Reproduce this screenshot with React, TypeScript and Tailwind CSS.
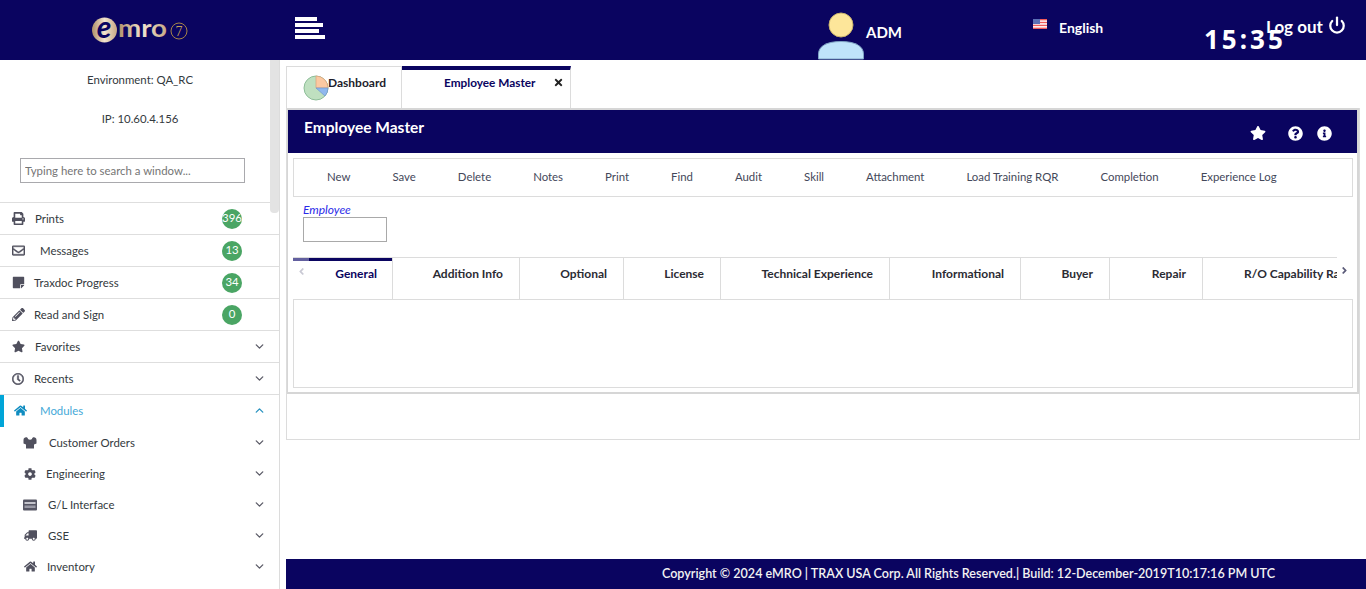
import { ReactNode } from "react";
import {
  FaAngleLeft,
  FaAngleRight,
  FaCog,
  FaHome,
  FaInfoCircle,
  FaPencilAlt,
  FaPrint,
  FaQuestionCircle,
  FaRegClock,
  FaRegEnvelope,
  FaStar,
  FaStickyNote,
  FaTimes,
  FaTruck,
} from "react-icons/fa";
import { FiPower } from "react-icons/fi";
import { ChevronDown, ChevronUp } from "lucide-react";

function UsersIcon() {
  return (
    <svg width="14" height="13" viewBox="0 0 14 13" fill="currentColor">
      <path d="M0.5 4 C0.5 0.5 5 0.5 5 3 C6 4 8 4 9 3 C9 0.5 13.5 0.5 13.5 4 L13.5 7.5 L11 8.5 L11 12.5 L3 12.5 L3 8.5 L0.5 7.5 Z" />
    </svg>
  );
}

function CardIcon() {
  return (
    <svg width="14" height="12" viewBox="0 0 14 12">
      <rect width="14" height="11" y="0.5" rx="1" fill="#565664" />
      <rect x="1.5" y="3" width="11" height="2" fill="#c4c4cc" />
      <rect x="1.5" y="6.5" width="11" height="2.5" fill="#9a9aa6" />
    </svg>
  );
}

const topItems: { label: string; icon: ReactNode; badge?: string; labelClass: string }[] = [
  { label: "Prints", icon: <FaPrint />, badge: "396", labelClass: "ml-[10px]" },
  { label: "Messages", icon: <FaRegEnvelope stroke="currentColor" strokeWidth={15} />, badge: "13", labelClass: "ml-[15px]" },
  { label: "Traxdoc Progress", icon: <FaStickyNote />, badge: "34", labelClass: "ml-[9px]" },
  { label: "Read and Sign", icon: <FaPencilAlt />, badge: "0", labelClass: "ml-[9px]" },
  { label: "Favorites", icon: <FaStar />, labelClass: "ml-[10px]" },
  { label: "Recents", icon: <FaRegClock stroke="currentColor" strokeWidth={20} className="text-xs" />, labelClass: "ml-[9px]" },
];

const moduleItems: { label: string; icon: ReactNode; labelClass: string }[] = [
  { label: "Customer Orders", icon: <UsersIcon />, labelClass: "ml-[12px]" },
  { label: "Engineering", icon: <FaCog className="text-xs" />, labelClass: "ml-[9px]" },
  { label: "G/L Interface", icon: <CardIcon />, labelClass: "ml-[11px]" },
  { label: "GSE", icon: <FaTruck className="-scale-x-100 text-[13px]" />, labelClass: "ml-[11px]" },
  { label: "Inventory", icon: <FaHome className="text-[13px]" />, labelClass: "ml-[10px]" },
];

const actions = [
  "New",
  "Save",
  "Delete",
  "Notes",
  "Print",
  "Find",
  "Audit",
  "Skill",
  "Attachment",
  "Load Training RQR",
  "Completion",
  "Experience Log",
];

const tabs: { label: string; widthClass: string }[] = [
  { label: "Addition Info", widthClass: "w-[127px]" },
  { label: "Optional", widthClass: "w-[104px]" },
  { label: "License", widthClass: "w-[97px]" },
  { label: "Technical Experience", widthClass: "w-[169px]" },
  { label: "Informational", widthClass: "w-[131px]" },
  { label: "Buyer", widthClass: "w-[89px]" },
  { label: "Repair", widthClass: "w-[93px]" },
];

function Logo() {
  return (
    <svg width="100" height="28" viewBox="0 0 100 28">
      <defs>
        <linearGradient id="gold" x1="0" y1="0" x2="1" y2="0">
          <stop offset="0" stopColor="#b08f68" />
          <stop offset="0.5" stopColor="#f2e4cf" />
          <stop offset="1" stopColor="#c6a884" />
        </linearGradient>
      </defs>
      <circle cx="13.5" cy="14" r="12.5" fill="url(#gold)" />
      <text x="13" y="22" textAnchor="middle" fontSize="30" fontStyle="italic" fontWeight="700" fill="#0a0460" fontFamily="Lato, sans-serif">
        e
      </text>
      <text x="27" y="21" fontSize="25" fontWeight="700" fill="url(#gold)" fontFamily="Lato, sans-serif" textLength="49" lengthAdjust="spacingAndGlyphs">
        mro
      </text>
      <circle cx="88" cy="15" r="8" fill="none" stroke="#a58348" strokeWidth="1" />
      <text x="88" y="20" textAnchor="middle" fontSize="14" fill="#c39f5a" fontFamily="Liberation Serif, serif">
        7
      </text>
    </svg>
  );
}

function UserIcon() {
  return (
    <svg width="48" height="50" viewBox="0 0 48 50" className="shrink-0">
      <circle cx="24" cy="15" r="12" fill="#fde69a" stroke="#c8b26c" strokeWidth="1" />
      <path d="M1.5 49 V44 C1.5 36 10 31.5 24 31.5 C38 31.5 46.5 36 46.5 44 V49 Z" fill="#bfe3fb" stroke="#7fa3c4" strokeWidth="1" />
    </svg>
  );
}

function Flag() {
  return (
    <svg width="14" height="10" viewBox="0 0 14 10">
      <rect width="14" height="10" fill="#fff" />
      <rect y="0" width="14" height="1.4" fill="#ef5a5a" />
      <rect y="2.8" width="14" height="1.4" fill="#ef5a5a" />
      <rect y="5.7" width="14" height="1.4" fill="#ef5a5a" />
      <rect y="8.6" width="14" height="1.4" fill="#ef5a5a" />
      <rect width="7" height="5" fill="#5b6fb5" />
    </svg>
  );
}

function Pie() {
  return (
    <svg width="26" height="26" viewBox="0 0 26 26" className="shrink-0">
      <circle cx="13" cy="13" r="12" fill="#bfe0c0" stroke="#8dbd98" strokeWidth="1" />
      <path d="M13 13 L13 1 A12 12 0 0 1 25 13 Z" fill="#fcc9a2" stroke="#d9a27a" strokeWidth="0.7" />
      <path d="M13 13 L25 13 A12 12 0 0 1 22 21 Z" fill="#90b8ee" stroke="#6f97cf" strokeWidth="0.7" />
    </svg>
  );
}

function Badge({ value }: { value: string }) {
  return (
    <span className="flex h-5 w-5 shrink-0 items-start justify-center rounded-full bg-[#4aa564] text-[11.4px] leading-[18px] text-white">
      {value}
    </span>
  );
}

export default function App() {
  return (
    <div className="flex h-[589px] w-[1366px] flex-col overflow-hidden bg-white font-['Lato',sans-serif] text-[11.4px] text-[#343a40]">
      <header className="relative flex h-[60px] shrink-0 items-start bg-[#0a0460] text-white">
        <div className="ml-[91px] mt-[16px]">
          <Logo />
        </div>
        <div className="ml-[104px] mt-[17px] flex w-[30px] flex-col gap-[2px]">
          <span className="h-1 w-[22px] bg-white" />
          <span className="h-1 w-[28px] bg-white" />
          <span className="h-1 w-[24px] bg-white" />
          <span className="h-1 w-[30px] bg-white" />
        </div>
        <div className="ml-[492px] mt-[10px]">
          <UserIcon />
        </div>
        <span className="ml-[1px] mt-[21px] w-[36px] whitespace-nowrap text-[15px] font-bold">ADM</span>
        <div className="ml-[131px] mt-[19px]">
          <Flag />
        </div>
        <span className="ml-[12px] mt-[18px] w-[45px] whitespace-nowrap text-sm font-bold">English</span>
        <span className="ml-[162px] mt-[14px] w-[59px] whitespace-nowrap text-[17px] font-bold">Log out</span>
        <FiPower className="ml-[3px] mt-[16px] text-lg" strokeWidth={3} />
        <span className="absolute left-[1204px] top-[22px] font-['Noto_Sans',sans-serif] text-[26px] leading-[34px] font-bold tracking-[3px]">15:35</span>
      </header>

      <div className="flex min-h-0 flex-1">
        <aside className="relative w-[280px] shrink-0 overflow-hidden border-r border-[#dcdcdc]">
          <div className="absolute right-0 top-0 h-[153px] w-[9px] rounded-b-sm bg-[#e3e3e3]" />
          <div className="flex h-[142px] flex-col pl-[20px] pt-[12px]">
            <p className="w-[240px] text-center leading-4">Environment: QA_RC</p>
            <p className="mt-[23px] w-[240px] text-center leading-4">IP: 10.60.4.156</p>
            <input
              readOnly
              placeholder="Typing here to search a window..."
              className="mt-[31px] h-[25px] w-[225px] border border-[#a9a9ad] px-1 text-[11.4px] text-[#757575] placeholder:text-[#757575]"
            />
          </div>
          {topItems.map((item) => (
            <div key={item.label} className="flex h-8 items-center border-t border-[#dedede] pl-[11px] pr-[13px]">
              <span className="flex w-[14px] justify-center text-[13px] text-[#50505e]">{item.icon}</span>
              <span className={item.labelClass}>{item.label}</span>
              <span className="ml-auto flex">
                {item.badge ? (
                  <span className="mr-[24px]">
                    <Badge value={item.badge} />
                  </span>
                ) : (
                  <ChevronDown size={13} strokeWidth={2.5} className="text-[#5c5c68]" />
                )}
              </span>
            </div>
          ))}
          <div className="flex h-8 items-center border-t border-[#dedede] pr-[13px] text-[#45a9d8]">
            <span className="h-8 w-1 bg-[#00a5d8]" />
            <FaHome className="ml-[10px] text-[13px] text-[#0f8cc0]" />
            <span className="ml-[13px] mt-[1px]">Modules</span>
            <ChevronUp size={13} strokeWidth={2.5} className="ml-auto text-[#2a93c0]" />
          </div>
          <div className="pt-[1px]">
            {moduleItems.map((item) => (
              <div key={item.label} className="flex h-[31px] items-center pl-[23px] pr-[13px]">
                <span className="flex w-[14px] justify-center text-[#50505e]">{item.icon}</span>
                <span className={item.labelClass}>{item.label}</span>
                <ChevronDown size={13} strokeWidth={2.5} className="ml-auto text-[#5c5c68]" />
              </div>
            ))}
          </div>
        </aside>

        <main className="flex min-w-0 flex-1 flex-col pl-[6px] pt-[6px]">
          <div className="flex h-[42px] shrink-0">
            <div className="flex w-[116px] items-start border border-b-0 border-[#dcdcdc] pl-[16px] pt-[8px]">
              <Pie />
              <span className="-ml-[1px] text-xs font-bold text-[#1d1d2b]">Dashboard</span>
            </div>
            <div className="flex w-[169px] items-start whitespace-nowrap border-r border-t-4 border-[#dcdcdc] border-t-[#0a0460] pl-[42px] pt-1">
              <span className="w-[91px] text-[11.8px] font-bold text-[#0a0460]">Employee Master</span>
              <FaTimes className="ml-[18px] mt-[3px] text-[11px] text-[#222]" />
            </div>
          </div>

          <div className="w-[1074px] border border-t-0 border-[#dcdcdc]">
            <div className="h-[286px] border-y-2 border-l border-r-2 border-[#d6d6d6]">
              <div className="flex h-[43px] items-start bg-[#0a0460] pl-[16px] pr-[25px] text-white">
                <h1 className="mt-[6px] text-[15.5px] font-bold">Employee Master</h1>
                <FaStar className="ml-auto mt-[15px] text-base" />
                <FaQuestionCircle className="ml-[22px] mt-[16px] text-[15px]" />
                <FaInfoCircle className="ml-[14px] mt-[16px] text-[15px]" />
              </div>

              <div className="px-[5px] pt-[5px]">
                <div className="flex h-[39px] w-[1060px] items-center gap-[42px] border border-[#dcdcdc] pb-[2px] pl-[33px] text-[#44485a]">
                  {actions.map((a) => (
                    <span key={a}>{a}</span>
                  ))}
                </div>

                <p className="ml-[10px] mt-[5px] text-xs italic leading-4 text-[#2a2ae8]">Employee</p>
                <input readOnly className="ml-[10px] mt-[-1px] block h-[25px] w-[84px] border border-[#a9a9a9]" />

                <div className="relative mt-[15px] w-[1060px] text-xs">
                  <div className="flex h-[42px] w-[1044px] overflow-hidden border-t border-[#dcdcdc]">
                    <div className="flex shrink-0 border-r border-[#dcdcdc]">
                      <div className="-mt-[1px] flex h-[42px] w-[99px] flex-col">
                        <div className="flex h-1 shrink-0">
                          <span className="w-4 bg-[#625f9f]" />
                          <span className="flex-1 bg-[#0a0460]" />
                        </div>
                        <span className="mt-[5px] pr-[15px] text-right font-bold text-[#0a0460]">General</span>
                      </div>
                    </div>
                    {tabs.map((t) => (
                      <div key={t.label} className={`${t.widthClass} shrink-0 whitespace-nowrap border-r border-[#dcdcdc] pr-[16px] pt-[8px] text-right font-bold text-[#2b2b33]`}>
                        {t.label}
                      </div>
                    ))}
                    <div className="shrink-0 whitespace-nowrap pl-[41px] pt-[8px] font-bold text-[#2b2b33]">R/O Capability Rating</div>
                  </div>
                  <FaAngleLeft className="absolute left-[3px] top-[9px] text-[11px] text-[#c9c9d4]" />
                  <FaAngleRight className="absolute left-[1046px] top-[8px] text-[11px] text-[#5a5a78]" />
                  <div className="h-[89px] border border-[#dcdcdc]" />
                </div>
              </div>
            </div>
            <div className="h-[45px]" />
          </div>

          <footer className="mt-auto flex h-[30px] shrink-0 items-center bg-[#0a0460] pl-[376px] text-[12.55px] font-semibold text-[#f2f2f2]">
            Copyright © 2024 eMRO | TRAX USA Corp. All Rights Reserved.| Build: 12-December-2019T10:17:16 PM UTC
          </footer>
        </main>
      </div>
    </div>
  );
}
